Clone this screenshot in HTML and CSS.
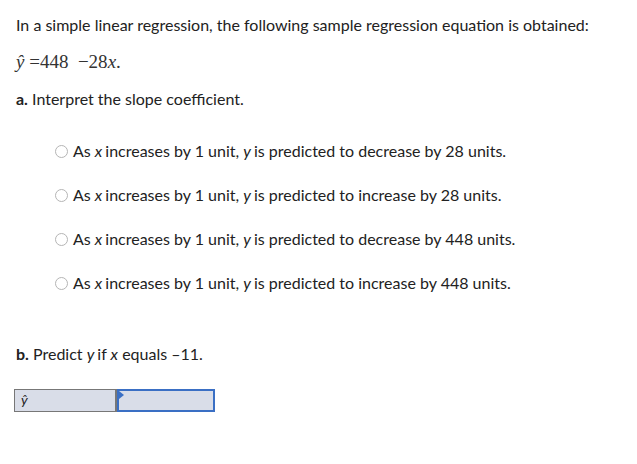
FILE: index.html
```html
<!DOCTYPE html>
<html>
<head>
<meta charset="utf-8">
<link rel="stylesheet" href="styles.css">
</head>
<body>
<div class="page">
  <p class="intro">In a simple linear regression, the following sample regression equation is obtained:</p>
  <p class="eq"><span class="yhat">ŷ</span> =448 &nbsp;&minus;28<i>x</i>.</p>
  <p class="q"><b>a.</b> Interpret the slope coefficient.</p>
  <div class="options">
    <label class="opt"><span class="radio"></span><span>As <i class="v">x</i>increases by 1 unit, <i class="v">y</i>is predicted to decrease by 28 units.</span></label>
    <label class="opt"><span class="radio"></span><span>As <i class="v">x</i>increases by 1 unit, <i class="v">y</i>is predicted to increase by 28 units.</span></label>
    <label class="opt"><span class="radio"></span><span>As <i class="v">x</i>increases by 1 unit, <i class="v">y</i>is predicted to decrease by 448 units.</span></label>
    <label class="opt"><span class="radio"></span><span>As <i class="v">x</i>increases by 1 unit, <i class="v">y</i>is predicted to increase by 448 units.</span></label>
  </div>
  <p class="q qb"><b>b.</b> Predict <i class="v">y</i>if <i>x</i> equals &ndash;11.</p>
  <div class="answer">
    <div class="cell label"><i>ŷ</i></div>
    <div class="cell input"><span class="flag"></span></div>
  </div>
</div>
</body>
</html>
```

FILE: styles.css
```css
html, body {
  margin: 0;
  padding: 0;
  background: #fff;
}
body {
  font-family: Lato, "Open Sans", Arial, sans-serif;
  font-size: 16px;
  color: #222;
}
.page {
  padding: 15px 0 0 16px;
}
p { margin: 0; }
.intro {
  line-height: 20px;
}
.eq {
  margin-top: 17px;
  font-family: "Liberation Serif", "Times New Roman", serif;
  font-size: 19px;
  line-height: 20px;
  color: #333;
}
.eq .yhat {
  font-style: italic;
}
.q {
  margin-top: 17px;
  line-height: 20px;
}
.q b { font-weight: 700; }
.v {
  margin-right: 3px;
}
.options {
  margin-top: 32px;
  padding-left: 39px;
  display: flex;
  flex-direction: column;
  gap: 24px;
}
.opt {
  display: flex;
  align-items: center;
  line-height: 20px;
  gap: 5px;
}
.radio {
  width: 13px;
  height: 13px;
  border: 1px solid #b5b5b5;
  border-radius: 50%;
  box-sizing: border-box;
  background: #fff;
  flex: none;
}
.qb {
  margin-top: 51px;
}
.answer {
  margin-top: 25px;
  margin-left: -2px;
  display: flex;
  width: 201px;
  height: 23px;
  border: 1px solid #777;
  box-sizing: border-box;
  background: #d9dde8;
}
.cell {
  height: 100%;
  box-sizing: border-box;
}
.label {
  width: 102px;
  border-right: 2px solid #777;
  font-size: 14px;
  padding: 1px 0 0 6px;
}
.input {
  flex: 1;
  position: relative;
  border: 2px solid #3a6fc4;
  margin: -1px -1px -1px 0;
  height: 23px;
}
.flag {
  position: absolute;
  left: 0;
  top: 0;
  width: 0;
  height: 0;
  border-top: 4px solid transparent;
  border-bottom: 4px solid transparent;
  border-left: 5px solid #3a6fc4;
}
```
